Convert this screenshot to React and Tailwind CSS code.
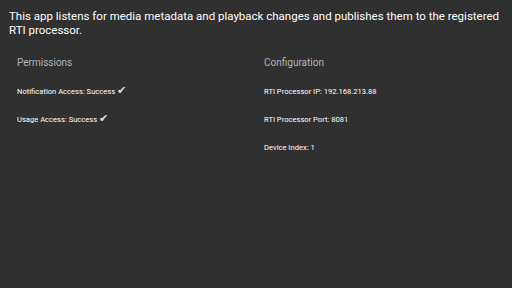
function Check() {
  return <span className="text-[11px] leading-none text-[#dedede]" style={{ fontFamily: '"DejaVu Sans", sans-serif' }}>✔</span>
}

export default function App() {
  const permissions = ['Notification Access: Success', 'Usage Access: Success']
  const config = [
    'RTI Processor IP: 192.168.213.88',
    'RTI Processor Port: 8081',
    'Device Index: 1',
  ]

  return (
    <div className="w-[512px] h-[288px] bg-[#303030] text-white overflow-hidden px-[9px] pt-[9px]" style={{ fontFamily: 'Roboto, "Noto Sans", sans-serif' }}>
      <p className="text-[11.5px] leading-[14px]">
        This app listens for media metadata and playback changes and publishes them to the registered RTI processor.
      </p>

      <div className="grid grid-cols-2 mt-[19px]">
        {/* Permissions */}
        <div className="px-2">
          <h2 className="text-[10px] leading-[14px] text-[#b4b4b4]">Permissions</h2>
          <div className="mt-[15px] flex flex-col gap-[14px]">
            {permissions.map((item) => (
              <p key={item} className="text-[7.6px] leading-[14px] h-[14px]">
                {item} <Check />
              </p>
            ))}
          </div>
        </div>

        {/* Configuration */}
        <div className="px-2">
          <h2 className="text-[10px] leading-[14px] text-[#b4b4b4]">Configuration</h2>
          <div className="mt-[15px] flex flex-col gap-[14px]">
            {config.map((item) => (
              <p key={item} className="text-[7.6px] leading-[14px] h-[14px]">{item}</p>
            ))}
          </div>
        </div>
      </div>
    </div>
  )
}
